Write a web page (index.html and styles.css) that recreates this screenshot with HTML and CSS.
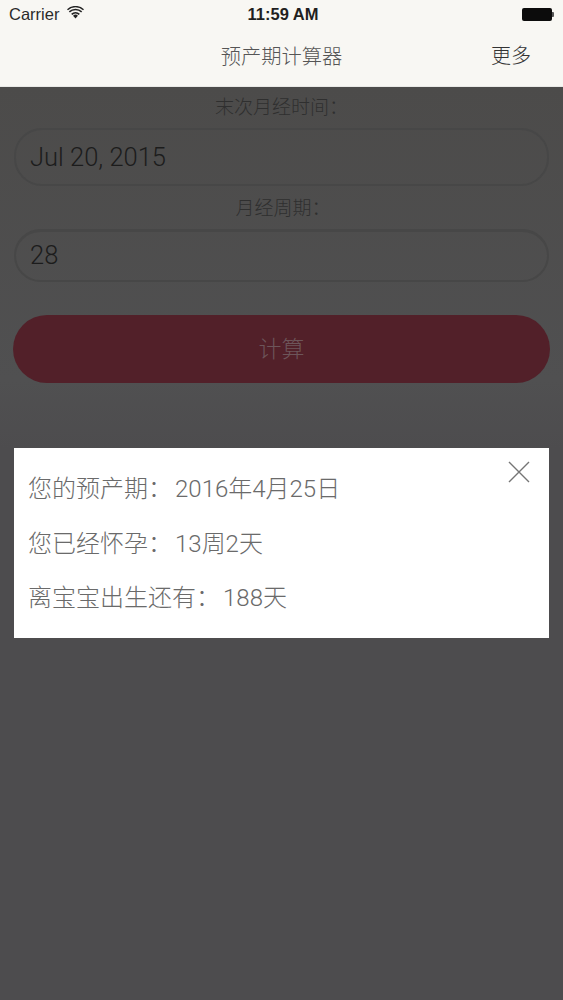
FILE: index.html
```html
<!DOCTYPE html>
<html lang="zh">
<head>
<meta charset="utf-8">
<title>预产期计算器</title>
<link rel="stylesheet" href="styles.css">
</head>
<body>
<div class="page">
  <header class="top">
    <div class="status">
      <div class="status-left">
        <span>Carrier</span>
        <svg class="wifi" viewBox="0 0 16 12" width="17" height="13"><path d="M8 11.6 5.7 9.1a3.3 3.3 0 0 1 4.6 0Z" fill="#222"/><path d="M3.9 7.2a6 6 0 0 1 8.2 0l-1 1.1a4.6 4.6 0 0 0-6.2 0Z" fill="#222"/><path d="M1.7 4.9a9.2 9.2 0 0 1 12.6 0l-1 1.1a7.8 7.8 0 0 0-10.6 0Z" fill="#222"/><path d="M0 2.9a11.8 11.8 0 0 1 16 0l-.9 1a10.4 10.4 0 0 0-14.2 0Z" fill="#222"/></svg>
      </div>
      <div class="status-time">11:59 AM</div>
      <div class="battery"><span class="battery-body"></span><span class="battery-tip"></span></div>
    </div>
    <div class="nav">
      <div class="nav-title">预产期计算器</div>
      <div class="nav-more">更多</div>
    </div>
  </header>
  <main class="form">
    <div class="label label-first">末次月经时间：</div>
    <div class="field field-date">Jul 20, 2015</div>
    <div class="label label-second">月经周期：</div>
    <div class="field field-cycle">28</div>
    <div class="submit">计算</div>
  </main>
  <section class="modal">
    <p class="line">您的预产期：<span class="value">2016年4月25日</span></p>
    <p class="line">您已经怀孕：<span class="value">13周2天</span></p>
    <p class="line">离宝宝出生还有：<span class="value">188天</span></p>
    <svg class="close" viewBox="0 0 22 22" width="22" height="22"><path d="M1 1 21 21M21 1 1 21" stroke="#757575" stroke-width="1.4" fill="none"/></svg>
  </section>
</div>
</body>
</html>
```
FILE: styles.css
```css
* { box-sizing: border-box; }
html, body { margin: 0; padding: 0; }
body {
  width: 563px;
  height: 1000px;
  overflow: hidden;
  background: #4d4c4e;
  font-family: "Roboto", "Noto Sans CJK SC", sans-serif;
}
.page {
  position: relative;
  width: 563px;
  height: 1000px;
  background: linear-gradient(#4c4b4a 86px, #505051 380px, #4d4c4e 450px);
}
.top {
  height: 87px;
  background: #f8f7f3;
  border-bottom: 1px solid #e9e9e6;
}
.status {
  height: 28px;
  display: flex;
  align-items: center;
  justify-content: space-between;
  padding: 0 9px;
  position: relative;
  font-family: "Liberation Sans", sans-serif;
  font-size: 16.5px;
  color: #2a2a2a;
}
.status-left { display: flex; align-items: center; gap: 8px; }
.wifi { display: block; margin-top: -3px; }
.status-time {
  position: absolute;
  left: 3px;
  right: 0;
  text-align: center;
  font-weight: 700;
  font-size: 16.5px;
  color: #1f1f1f;
}
.battery { display: flex; align-items: center; margin-top: 1px; }
.battery-body { width: 30px; height: 13px; border-radius: 2px; background: #0c0c0c; }
.battery-tip { width: 2px; height: 5px; background: #555; border-radius: 0 1px 1px 0; }
.nav {
  height: 58px;
  display: flex;
  align-items: center;
  justify-content: center;
  position: relative;
  padding-bottom: 4px;
}
.nav-title { font-size: 20.3px; font-weight: 300; color: #555; }
.nav-more {
  position: absolute;
  right: 32px;
  top: 12px;
  font-size: 20px;
  font-weight: 300;
  color: #333;
}
.form {
  padding: 0 13px;
  display: flex;
  flex-direction: column;
}
.label {
  text-align: center;
  font-size: 19px;
  line-height: 24px;
  font-weight: 300;
  color: #2f2f2f;
}
.label-first { margin-top: 9px; }
.label-second { margin-top: 11px; padding-left: 3px; }
.field {
  border: 2px solid #474747;
  border-radius: 28px;
  margin: 0 1px;
  color: #1c1c1c;
  font-weight: 300;
  display: flex;
  align-items: center;
  padding-left: 14px;
  font-size: 25.5px;
}
.field-date { height: 58px; margin-top: 8px; }
.field-cycle { height: 53px; margin-top: 8px; border-top-width: 3px; padding-bottom: 2px; }
.submit {
  margin-top: 33px;
  height: 68px;
  border-radius: 34px;
  background: #522029;
  color: #6d555a;
  font-size: 23px;
  font-weight: 300;
  padding-bottom: 5px;
  display: flex;
  align-items: center;
  justify-content: center;
}
.modal {
  position: absolute;
  left: 14px;
  top: 448px;
  width: 535px;
  height: 190px;
  background: #fff;
  padding: 14px 14px 0;
}
.line {
  margin: 0;
  height: 54.5px;
  line-height: 54.5px;
  font-size: 24px;
  font-weight: 300;
  color: #6a6a6a;
  white-space: pre;
}
.value { margin-left: 3px; }
.close { position: absolute; right: 19px; top: 13px; }
```
